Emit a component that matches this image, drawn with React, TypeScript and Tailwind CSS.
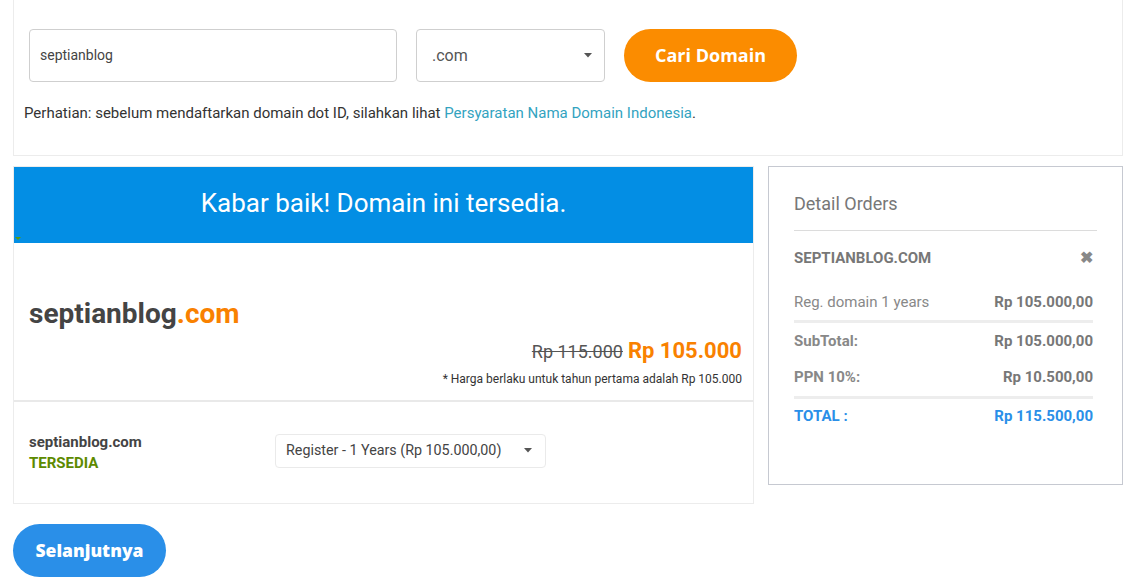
import React from "react";

const Caret = () => (
  <svg width="8" height="5" viewBox="0 0 8 5" className="shrink-0">
    <path d="M0 0 L8 0 L4 4.5 Z" fill="#555" />
  </svg>
);

export default function App() {
  return (
    <div className="w-[1142px] h-[587px] bg-white overflow-hidden text-[#333]" style={{ fontFamily: "Roboto, 'Liberation Sans', sans-serif" }}>
      {/* Top search card */}
      <div className="ml-[13px] w-[1110px] h-[166px] -mt-[10px] border border-[#ececec] bg-white pl-[15px] pt-[38px]">
        <div className="flex items-center">
          <div className="w-[368px] h-[53px] border border-[#cfcfcf] rounded-[4px] flex items-center px-[10px] text-[14px] text-[#444]">septianblog</div>
          <div className="ml-[19px] w-[189px] h-[53px] border border-[#cfcfcf] rounded-[4px] flex items-center justify-between pl-[15px] pr-[12px] text-[16px] text-[#555]">
            <span>.com</span>
            <Caret />
          </div>
          <button className="ml-[19px] w-[173px] h-[53px] rounded-full bg-[#fb8c00] text-white text-[18px] font-bold flex items-center justify-center" style={{ fontFamily: "'Open Sans', Lato, sans-serif" }}>Cari Domain</button>
        </div>
        <p className="mt-[20px] -ml-[5px] text-[15px] text-[#333]">
          Perhatian: sebelum mendaftarkan domain dot ID, silahkan lihat <span className="text-[#33a3bf]">Persyaratan Nama Domain Indonesia</span>.
        </p>
      </div>

      {/* Main row */}
      <div className="flex items-start mt-[10px] ml-[13px]">
        <div className="w-[741px]">
          <div className="border border-[#ececec]">
            <div className="relative h-[76px] bg-[#038ee4] flex items-center justify-center text-white text-[26px] pb-[4px]">
              Kabar baik! Domain ini tersedia.
              <div className="absolute left-[1px] bottom-[3px] w-0 h-0 border-l-[3px] border-r-[3px] border-t-[3px] border-l-transparent border-r-transparent border-t-[#5a9a10]" />
            </div>
            <div className="h-[157px] relative px-[15px]">
              <div className="pt-[55px] text-[28px] font-bold text-[#444] leading-[32px]">
                septianblog<span className="text-[#f98100]">.com</span>
              </div>
              <div className="absolute right-[11px] top-[91px] flex items-baseline gap-[5px]">
                <span className="text-[18px] text-[#555] line-through">Rp 115.000</span>
                <span className="text-[22px] font-bold text-[#f98100]">Rp 105.000</span>
              </div>
              <div className="absolute right-[11px] top-[127px] text-[12px] text-[#333]">* Harga berlaku untuk tahun pertama adalah Rp 105.000</div>
            </div>
            <div className="h-[2px] bg-[#e9e9e9]" />
            <div className="h-[101px] flex items-center px-[15px]">
              <div className="w-[246px] text-[15px] font-bold leading-[21px]">
                <div className="text-[#444]">septianblog.com</div>
                <div className="text-[#5d8a00]">TERSEDIA</div>
              </div>
              <div className="mb-[4px] w-[271px] h-[34px] border border-[#eaeaea] rounded-[4px] flex items-center justify-between pl-[10px] pr-[13px] text-[14.3px] text-[#444]">
                <span>Register - 1 Years (Rp 105.000,00)</span>
                <Caret />
              </div>
            </div>
          </div>
          <button className="mt-[20px] w-[153px] h-[53px] rounded-full bg-[#2a8fe8] text-white text-[17.5px] font-extrabold flex items-center justify-center" style={{ fontFamily: "'Open Sans', Lato, sans-serif" }}>Selanjutnya</button>
        </div>

        <div className="ml-[14px] w-[355px] h-[319px] border border-[#c6c9d1] px-[25px] pt-[23px]">
          <div className="text-[18px] leading-[27px] text-[#777] pb-[13px] border-b border-[#dcdcdc]">Detail Orders</div>
          <div className="flex justify-between items-center h-[24px] mt-[15px] pr-[4px] text-[15px] font-bold text-[#777]">
            <span>SEPTIANBLOG.COM</span>
            <span className="text-[16px] text-[#888]">✖</span>
          </div>
          <div className="pr-[4px] text-[15px] leading-[21px]">
            <div className="flex justify-between mt-[22px] pb-[7px] border-b-[3px] border-[#ededed]">
              <span className="text-[#888]">Reg. domain 1 years</span>
              <span className="font-bold text-[#777]">Rp 105.000,00</span>
            </div>
            <div className="flex justify-between mt-[8px] font-bold text-[#888]">
              <span>SubTotal:</span>
              <span className="text-[#777]">Rp 105.000,00</span>
            </div>
            <div className="flex justify-between mt-[15px] pb-[8px] border-b-[3px] border-[#ededed] font-bold text-[#888]">
              <span>PPN 10%:</span>
              <span className="text-[#777]">Rp 10.500,00</span>
            </div>
            <div className="flex justify-between mt-[7px] font-bold text-[#2a8fe8]">
              <span>TOTAL :</span>
              <span>Rp 115.500,00</span>
            </div>
          </div>
        </div>
      </div>
    </div>
  );
}
